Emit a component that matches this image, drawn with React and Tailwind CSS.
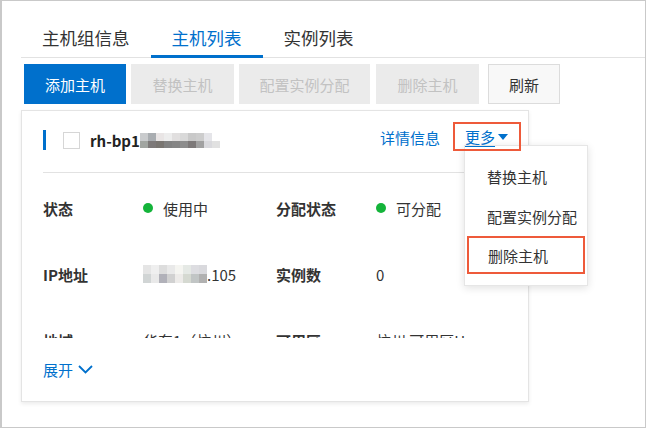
import React from "react";

const topCells = ["#c9cbcd", "#a9adb1", "#e9e5e5", "#ededed", "#e1dfdf", "#d9d9d9", "#c9c9c9", "#cdcdcd", "#e5e5e9", "#ffffff"];
const botCells = ["#a1a5a1", "#7d7979", "#797571", "#818181", "#858585", "#8d8d8d", "#7d7979", "#a1a1a1", "#d9d9dd", "#e1e1e1"];
const ipTop = ["#e5e5e5", "#efefef", "#dddddd", "#e9e9e9", "#f5f5f1", "#e5e9e5", "#dddde1", "#d9d9dd"];
const ipBot = ["#d1d5d5", "#e9e9e9", "#b1b1b9", "#d1d1d1", "#edebe9", "#d5d9d1", "#c1c5c5", "#b1b1b1"];

function Blur({ top, bot, cw, h1, h2 }) {
  return (
    <div className="flex flex-col">
      <div className="flex">
        {top.map((c, i) => (
          <div key={i} style={{ background: c, width: cw, height: h1 }} />
        ))}
      </div>
      <div className="flex">
        {bot.map((c, i) => (
          <div key={i} style={{ background: c, width: cw, height: h2 }} />
        ))}
      </div>
    </div>
  );
}

function Dot() {
  return <span className="w-[10px] h-[10px] rounded-full bg-[#14b43a] mr-[10px] shrink-0" />;
}

function Row({ l1, v1, l2, v2 }) {
  return (
    <div className="flex items-center h-[66px] text-[15px] leading-none text-[#333]">
      <div className="w-[100px] font-semibold">{l1}</div>
      <div className="w-[133px] flex items-center">{v1}</div>
      <div className="w-[100px] font-semibold">{l2}</div>
      <div className="flex items-center">{v2}</div>
    </div>
  );
}

export default function App() {
  return (
    <div className="w-[646px] h-[428px] bg-white border border-l-2 border-[#c9c9c9] font-['Noto_Sans_CJK_SC',sans-serif] text-[#333] overflow-hidden">
      <div className="pl-[19px] pr-0">
        {/* Tabs */}
        <div className="mt-[19px] flex h-[38px] border-b border-[#e2e2e2]">
          <div className="h-[38px] px-[21px] pt-[1px] border-b-[3px] border-transparent flex items-center text-[17.5px] leading-none text-[#333] -mb-px">
            主机组信息
          </div>
          <div className="h-[38px] px-[21px] pt-[1px] border-b-[3px] border-[#0070cc] flex items-center text-[17.5px] leading-none text-[#0070cc] -mb-px">
            主机列表
          </div>
          <div className="h-[38px] px-[21px] pt-[1px] border-b-[3px] border-transparent flex items-center text-[17.5px] leading-none text-[#333] -mb-px">
            实例列表
          </div>
        </div>

        {/* Buttons */}
        <div className="mt-[6px] ml-[3px] flex h-[40px] text-[15px] leading-none">
          <div className="w-[102px] h-[40px] bg-[#0070cc] text-white flex items-center justify-center">添加主机</div>
          <div className="ml-[5px] w-[103px] h-[40px] bg-[#ebebeb] text-[#c2c2c2] flex items-center justify-center">替换主机</div>
          <div className="ml-[5px] w-[131px] h-[40px] bg-[#ebebeb] text-[#c2c2c2] flex items-center justify-center">配置实例分配</div>
          <div className="ml-[6px] w-[103px] h-[40px] bg-[#ebebeb] text-[#c2c2c2] flex items-center justify-center">删除主机</div>
          <div className="ml-[9px] w-[72px] h-[40px] bg-[#f8f8f8] border border-[#dcdcdc] text-[#333] flex items-center justify-center">刷新</div>
        </div>

        {/* Card */}
        <div className="mt-[6px] w-[508px] bg-white border border-[#e4e4e4] shadow-[0_2px_4px_rgba(0,0,0,0.08)] pl-[21px] pr-[7px]">
          <div className="relative h-[62px] pb-[3px] flex items-center border-b border-[#e2e2e2]">
            <div className="w-[3px] h-[20px] bg-[#0070cc]" />
            <div className="ml-[17px] w-[17px] h-[17px] border border-[#d6d6d6] bg-white" />
            <div className="ml-[10px] text-[15px] font-bold leading-none text-[#222]">rh-bp1</div>
            <Blur top={topCells} bot={botCells} cw={8} h1={8} h2={7} />
            <div className="flex-1" />
            <div className="text-[15px] leading-none text-[#0070cc] mr-[13px] -mt-[6px]">详情信息</div>
            <div className="relative -mt-[7px]">
              <div className="relative z-20 h-[29px] w-[68px] border-2 border-[#ee5a3a] flex items-center pl-[10px]">
                <span className="text-[15px] leading-none text-[#0070cc] underline underline-offset-[3px]">更多</span>
                <svg width="10" height="6" viewBox="0 0 10 6" className="ml-[3px]">
                  <path d="M0 0 L10 0 L5 6 Z" fill="#0070cc" />
                </svg>
              </div>
              {/* Dropdown */}
              <div className="absolute z-10 left-[11px] top-[23px] w-[124px] h-[141px] bg-white border border-[#e6e6e6] shadow-[0_2px_8px_rgba(0,0,0,0.12)] pt-[10px]">
                <div className="h-[40px] flex items-center pl-[22px] text-[15px] leading-none text-[#333]">替换主机</div>
                <div className="h-[40px] flex items-center pl-[22px] text-[15px] leading-none text-[#333]">配置实例分配</div>
                <div className="mx-[2px] h-[38px] border-2 border-[#ee5a3a] flex items-center pl-[19px] text-[15px] leading-none text-[#333]">删除主机</div>
              </div>
            </div>
          </div>

          <div className="h-[165px] overflow-hidden pt-[2px]">
            <Row
              l1="状态"
              v1={<><Dot /><span>使用中</span></>}
              l2="分配状态"
              v2={<><Dot /><span>可分配</span></>}
            />
            <Row
              l1="IP地址"
              v1={<><Blur top={ipTop} bot={ipBot} cw={8} h1={9} h2={9} /><span>.105</span></>}
              l2="实例数"
              v2={<span>0</span>}
            />
            <Row
              l1="地域"
              v1={<span>华东1（杭州）</span>}
              l2="可用区"
              v2={<span>杭州 可用区H</span>}
            />
          </div>

          <div className="h-[63px] flex items-center text-[15px] leading-none text-[#0070cc]">
            <span>展开</span>
            <svg width="15" height="9" viewBox="0 0 15 9" className="ml-[5px]">
              <polyline points="1,1 7.5,7.5 14,1" fill="none" stroke="#0070cc" strokeWidth="1.8" />
            </svg>
          </div>
        </div>
      </div>
    </div>
  );
}
